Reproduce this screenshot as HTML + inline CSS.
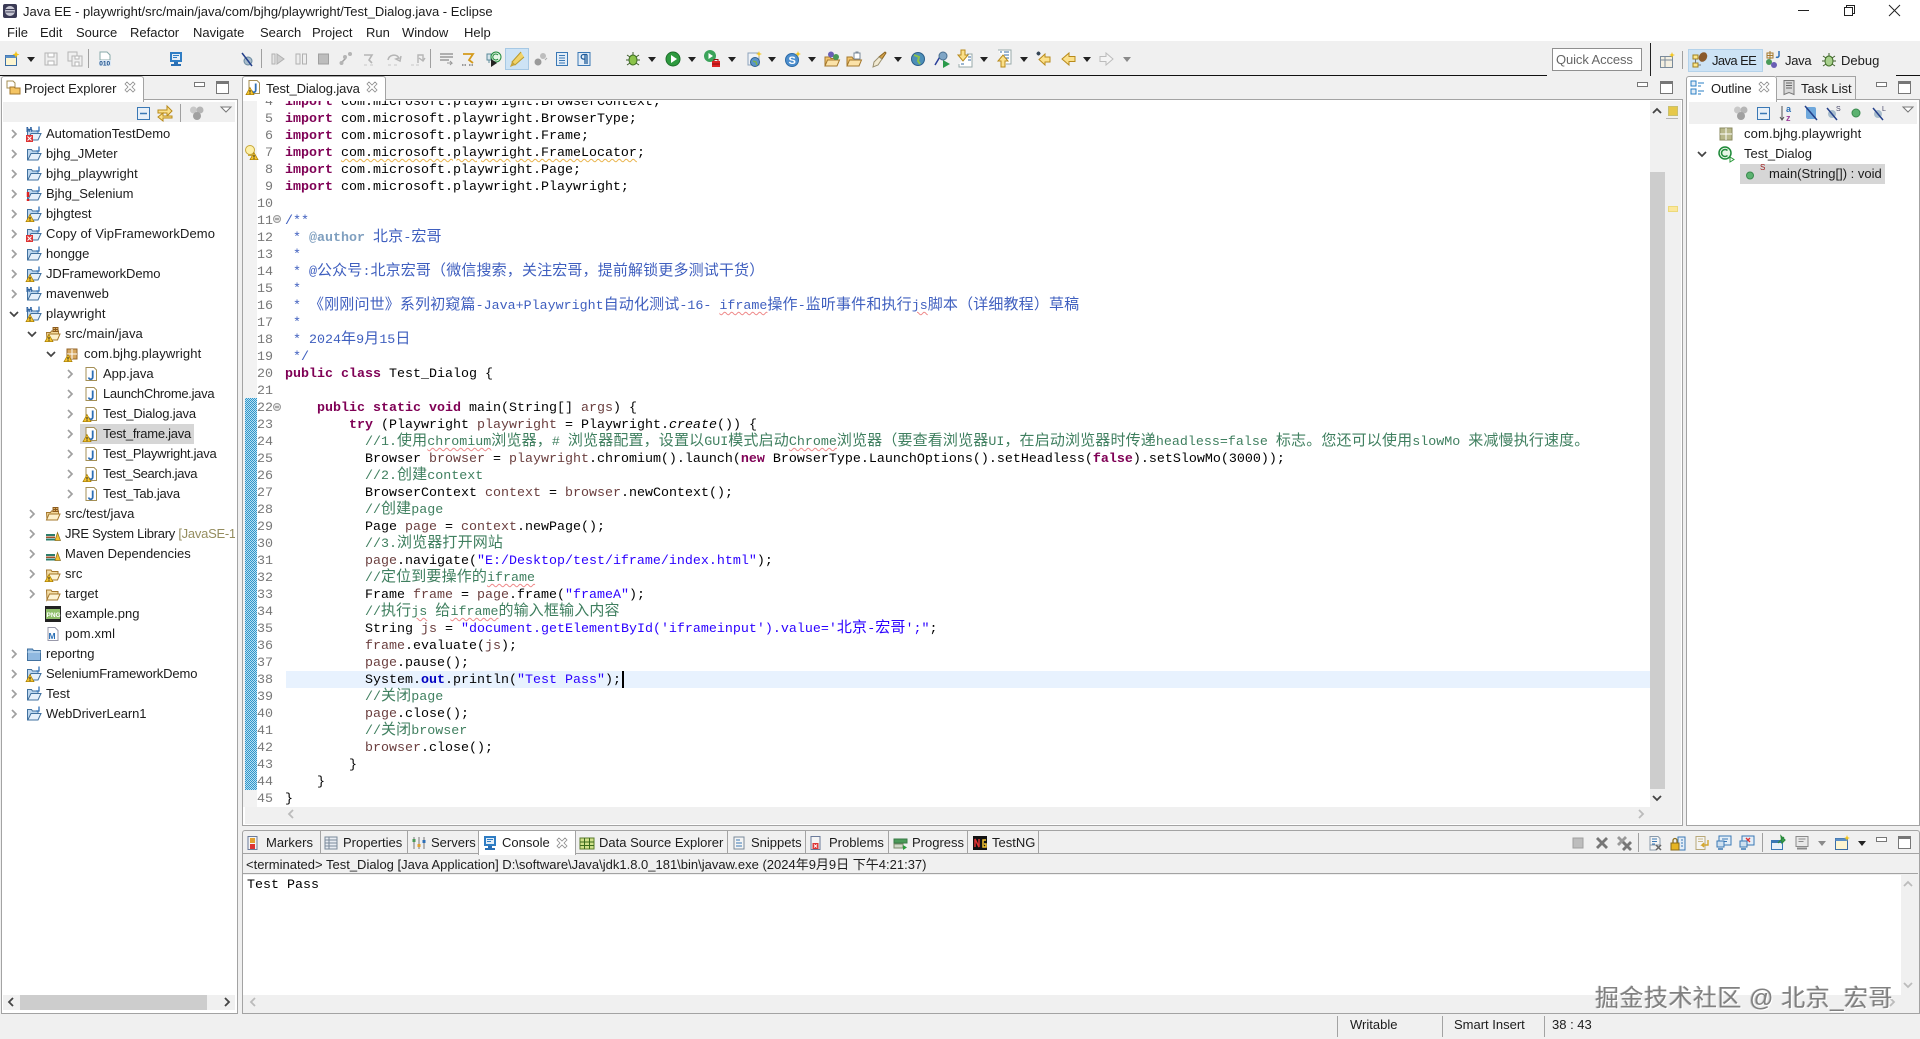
<!DOCTYPE html>
<html lang="zh"><head><meta charset="utf-8"><title>Java EE - Eclipse</title>
<style>
html,body{margin:0;padding:0;width:1920px;height:1039px;overflow:hidden;background:#f0f0f0}
body{position:relative;font:13px/20px "Liberation Sans","Noto Sans CJK SC",sans-serif;color:#1c1c1c}
div,svg,span.a{position:absolute}
.t{position:absolute;white-space:pre;line-height:20px;height:20px}
.i{position:absolute;width:16px;height:16px;overflow:visible}
.d{width:0;height:0;border:4px solid transparent;border-top:5px solid #222;border-bottom:0}
.v{width:1px;background:#a0a0a0}
.g{background:#f0f0f0}
.w{background:#fff}
.ln{background:#a3a3a3}
.mn{width:9px;height:3px;border:1px solid #777;background:#fff}
.mx{width:11px;height:11px;border:1px solid #777;background:#fff;box-shadow:inset 0 2px 0 #777}
pre{margin:0;font:13.33px/17px "Liberation Mono",monospace;color:#000;white-space:normal}
pre div{position:static;height:17px;white-space:pre}
pre b{color:#7f0055;font-weight:bold}
pre em{font:15px/0 "Noto Sans CJK SC","WenQuanYi Zen Hei",sans-serif;font-style:normal;letter-spacing:.15px}
pre var{font-style:normal;color:#6a3e3e}
pre cite{font-style:normal;color:#2a00ff}
pre dfn{font-style:normal;font-weight:bold;color:#0000c0}
pre .c{color:#3f7f5f}
pre .j{color:#3f5fbf}
pre .at{color:#7f9fbf;font-weight:bold}
pre u{text-decoration:underline wavy #e88;text-decoration-thickness:1px;text-underline-offset:2px}
pre u.y{text-decoration-color:#e9b44c}
.sel{background:#d6d6d6}
</style></head><body>
<svg width="0" height="0" style="position:absolute"><defs>
<g id="pf"><path d="M1.5 3.5h4l1 1.5h5.5v3H5L2 14H1.5z" fill="#bcd6ee" stroke="#41719f"/><path d="M5 7.5h10L12 14H1.8z" fill="#e6f0fa" stroke="#41719f"/><path d="M13 .5v4.5h-3" fill="none" stroke="#2f6fb5" stroke-width="1.3"/></g>
<g id="wn"><path d="M4 8.5l4 7.2H0z" fill="#f6c52e" stroke="#a67c00" stroke-width=".7"/><path d="M4 11v2.5M4 14.2v.9" stroke="#222"/></g>
<g id="er"><rect x="0" y="9" width="7" height="7" fill="#d33"/><path d="M1.5 10.5l4 4m0-4l-4 4" stroke="#fff"/></g>
<text id="mv" x="0" y="6" font-size="7.5" font-weight="bold" fill="#2a5fa0" font-family="Liberation Sans">M</text>
<g id="jf"><path d="M3 1.5h8l2.5 2.5v10.5H3z" fill="#fff" stroke="#a48f55"/><path d="M9.7 4.5v6.5a2 2 0 0 1-4 .5" stroke="#2f6fb5" stroke-width="1.8" fill="none"/></g>
<g id="sf"><path d="M1.5 6.5h4l1-1.5h7v3H4.5L2 14z" fill="#f4d99a" stroke="#a5782c"/><path d="M4 8h11l-2.5 6H1.5z" fill="#fdf0c9" stroke="#a5782c"/><path d="M8 1.5h5v4H8zM10.5 1v5M8 3.5h5" stroke="#8a5a1c" fill="#e2b164" stroke-width=".9"/></g>
<g id="pk"><path d="M3 3h10v10H3z" fill="#d6a760" stroke="#94662a"/><path d="M8 3v10M3 8h10" stroke="#fff"/></g>
<g id="lb"><path d="M1 10.5h9v1.5H1z" fill="#a0522d"/><path d="M1 12.5h9v2H1z" fill="#2e7d6b"/><path d="M1 8h9v2H1z" fill="#2e7d6b"/><path d="M10 14.5l2.5-8 3 8z" fill="#f1c232" stroke="#8a6d1c" stroke-width=".7"/></g>
<g id="fd"><path d="M1.5 4h4.5l1 1.5h6v2.5H5L2 14z" fill="#f4dda5" stroke="#a5782c"/><path d="M4.5 8H15l-2.5 6H1.8z" fill="#fdf3d5" stroke="#a5782c"/></g>
<g id="cr"><path d="M6 4l4 4-4 4" fill="none" stroke="#a0a0a0" stroke-width="1.7"/></g>
<g id="cd"><path d="M4 6l4 4 4-4" fill="none" stroke="#444" stroke-width="1.7"/></g>
<g id="xx"><path d="M5 3l3 3 3-3 2 2-3 3 3 3-2 2-3-3-3 3-2-2 3-3-3-3z" fill="#fff" stroke="#8c8c8c" stroke-width=".8"/></g>
</defs></svg>

<!-- title bar -->
<div class="w" style="left:0;top:0;width:1920px;height:41px"></div>
<svg class="i" style="left:2px;top:3px"><rect x="1" y="1" width="14" height="14" rx="2" fill="#3a3a55"/><circle cx="8" cy="8" r="5" fill="#c8c8d4"/><path d="M3.5 6.5h9M3.5 9h9" stroke="#3a3a55"/></svg>
<span class="t" style="left:23px;top:2px">Java EE - playwright/src/main/java/com/bjhg/playwright/Test_Dialog.java - Eclipse</span>
<div style="left:1798px;top:10px;width:11px;height:1px;background:#222"></div>
<svg class="i" style="left:1841px;top:2px"><path d="M3.5 5.5h8v8h-8zM5.5 5V3.5h8v8H12" fill="none" stroke="#222"/></svg>
<svg class="i" style="left:1887px;top:2px"><path d="M2 3l11 11m0-11L2 14" stroke="#222" fill="none"/></svg>
<span class="t" style="left:7px;top:23px">File</span><span class="t" style="left:40px;top:23px">Edit</span><span class="t" style="left:76px;top:23px">Source</span><span class="t" style="left:130px;top:23px">Refactor</span><span class="t" style="left:193px;top:23px">Navigate</span><span class="t" style="left:260px;top:23px">Search</span><span class="t" style="left:312px;top:23px">Project</span><span class="t" style="left:366px;top:23px">Run</span><span class="t" style="left:402px;top:23px">Window</span><span class="t" style="left:464px;top:23px">Help</span>

<!-- main toolbar -->
<div class="g" style="left:0;top:41px;width:1920px;height:34px"></div>
<div style="left:0;top:75px;width:1547px;height:1px;background:#111"></div>
<div style="left:1896px;top:75px;width:24px;height:1px;background:#111"></div>
<div style="left:1650px;top:43px;width:1px;height:33px;background:#222"></div>

<svg class="i" style="left:4px;top:51px"><path d="M1.5 4.5h11v10h-11z" fill="#fdf5d0" stroke="#3a6ea5"/><path d="M1.5 4.5h11v2.5h-11z" fill="#5a8fc8"/><path d="M12 0l1 2.5 2.5 1-2.5 1-1 2.5-1-2.5-2.5-1 2.5-1z" fill="#f5c518"/></svg>
<div class="d" style="left:27px;top:57px"></div>
<svg class="i" style="left:43px;top:51px"><path d="M2 2h12v12H2z" fill="#f0f0f0" stroke="#b5b5b5"/><path d="M5 2h6v4H5zM5 10h6v4H5z" fill="#fff" stroke="#b5b5b5"/></svg>
<svg class="i" style="left:67px;top:51px"><path d="M1 1h9v9H1z" fill="#f0f0f0" stroke="#b5b5b5"/><path d="M5 5h10v10H5z" fill="#f0f0f0" stroke="#b5b5b5"/><path d="M8 5h4v3H8zM8 11h4v4H8z" fill="#fff" stroke="#b5b5b5"/></svg>
<div class="v" style="left:88px;top:49px;height:19px"></div>
<svg class="i" style="left:97px;top:51px"><path d="M3 1h7l3 3v5H3z" fill="#fff" stroke="#8aa"/><rect x="2" y="9" width="12" height="6" fill="#dbe8f5"/><text x="2.3" y="14.5" font-size="6.5" font-weight="bold" fill="#1d4f8a" font-family="Liberation Sans">010</text></svg>
<svg class="i" style="left:168px;top:51px"><path d="M2 1h12v10H2z" fill="#2f7dc4"/><path d="M4 3h8v6H4z" fill="#e4eef7"/><path d="M5 4.5h6M5 6.5h4" stroke="#2f7dc4"/><path d="M6 11h4v2H6zM3 13h10v2H3z" fill="#2a6fb4"/></svg>
<svg class="i" style="left:239px;top:51px"><circle cx="9" cy="10" r="4" fill="#a9bdcc" stroke="#6a89a0"/><path d="M3 2l10 13" stroke="#24408a" stroke-width="1.5"/></svg>
<div class="v" style="left:261px;top:49px;height:19px"></div>
<svg class="i" style="left:270px;top:51px"><path d="M2 3h3v10H2z" fill="#e6e6e6" stroke="#b0b0b0"/><path d="M7 3l7 5-7 5z" fill="#cfcfcf" stroke="#b0b0b0"/></svg>
<svg class="i" style="left:293px;top:51px"><path d="M3 3h4v10H3zM9.500 3h4v10h-4z" fill="#eee" stroke="#b0b0b0"/></svg>
<svg class="i" style="left:316px;top:51px"><rect x="2.500" y="3" width="10" height="10" fill="#bdbdbd" stroke="#a0a0a0"/></svg>
<svg class="i" style="left:338px;top:51px"><path d="M3 12l5-5" stroke="#a0a0a0" stroke-width="1.500"/><circle cx="3.500" cy="12" r="2" fill="#b5b5b5"/><circle cx="7" cy="6" r="2" fill="#b5b5b5"/><circle cx="12" cy="3" r="2" fill="#b5b5b5"/></svg>
<svg class="i" style="left:361px;top:51px"><path d="M3 4h8l-3 5 3 3" fill="none" stroke="#b5b5b5" stroke-width="1.600"/><path d="M3 14h3M9 14h3" stroke="#c8c8c8"/></svg>
<svg class="i" style="left:386px;top:51px"><path d="M2 9a6 6 0 0 1 11-2l-3 1 4 2 1-5" fill="none" stroke="#b5b5b5" stroke-width="1.500"/><path d="M2 14h3M8 14h3" stroke="#c8c8c8"/></svg>
<svg class="i" style="left:410px;top:51px"><path d="M8 12V4l5 0v5M9 7l4 3 2-3" fill="none" stroke="#b5b5b5" stroke-width="1.400"/><path d="M1 14h3M6 14h3" stroke="#c8c8c8"/></svg>
<div class="v" style="left:430px;top:49px;height:19px"></div>
<svg class="i" style="left:439px;top:51px"><path d="M1 3h13M1 6h13M1 9h9" stroke="#888" stroke-width="1.300"/><path d="M8 12h5l-2-2M13 12l-2 2" stroke="#999" fill="none"/></svg>
<svg class="i" style="left:461px;top:51px"><path d="M2 3h10l-4 6 4 3" fill="none" stroke="#d49a1c" stroke-width="1.800"/><path d="M1 14h4M8 14h4" stroke="#444" stroke-dasharray="1.500 1"/></svg>
<svg class="i" style="left:486px;top:51px"><path d="M1 3h4v6H1zM3 9v3" stroke="#5a8a9a" fill="#d5e4ea"/><circle cx="10" cy="6" r="5" fill="#e6f5e6" stroke="#1f8a3a"/><path d="M12 4a3 3 0 1 0 0 4" stroke="#1f8a3a" fill="none"/><path d="M5 8l6 4-6 4z" fill="#222"/></svg>
<div style="left:505px;top:48px;width:22px;height:20px;background:#cde3f5;border:1px solid #a6c8e4"></div>
<svg class="i" style="left:508px;top:51px"><path d="M13 1L4 11l3 3 9-8" fill="#f1d36a" stroke="#b89a2c"/><path d="M2 16l2-5 3 3z" fill="#c7a43a"/></svg>
<svg class="i" style="left:532px;top:51px"><circle cx="6" cy="11" r="3.500" fill="#9a9a9a"/><circle cx="11" cy="5" r="3" fill="#bdbdbd"/><path d="M13 9l2-2" stroke="#aaa"/></svg>
<svg class="i" style="left:554px;top:51px"><path d="M2.500 1.500h11v13h-11z" fill="#e3edf7" stroke="#3a78b5"/><path d="M5 4.500h6M5 7h6M5 9.500h6M5 12h6" stroke="#3a78b5"/></svg>
<svg class="i" style="left:576px;top:51px"><path d="M2 1.500h12v13H2z" fill="#e3edf7" stroke="#3a78b5"/><path d="M11 3.500H7.500a2.300 2.300 0 0 0 0 4.600H9M9 3.500V13M11 3.500V13" stroke="#1e5b9a" fill="none" stroke-width="1.300"/></svg>
<svg class="i" style="left:625px;top:51px"><ellipse cx="8" cy="9" rx="4" ry="5" fill="#8bc34a" stroke="#3e6e25"/><path d="M2 4l3 2M14 4l-3 2M1 9h3M15 9h-3M2 14l3-2M14 14l-3-2M8 4V1" stroke="#3e5e2a"/></svg>
<div class="d" style="left:648px;top:57px"></div>
<svg class="i" style="left:665px;top:51px"><circle cx="8" cy="8" r="7" fill="#2e9a3f" stroke="#1c6e2a"/><path d="M6 4l6 4-6 4z" fill="#fff"/></svg>
<div class="d" style="left:688px;top:57px"></div>
<svg class="i" style="left:703px;top:49px"><circle cx="7" cy="7" r="6" fill="#3ba35a"/><path d="M5.500 4l4.500 3-4.500 3z" fill="#fff"/><path d="M9 12h8v6H9z" fill="#d22"/><path d="M11 12v-1.500h4V12M9 15h8" stroke="#8a1010" fill="none"/></svg>
<div class="d" style="left:728px;top:57px"></div>
<svg class="i" style="left:746px;top:51px"><path d="M2 2h11v12H2z" fill="#eef2f7" stroke="#8ea3bb"/><circle cx="9" cy="11" r="4.500" fill="#5b93c8" stroke="#2d5f8f"/><path d="M7 10l3 1 1 3" stroke="#7cb342" fill="none" stroke-width="1.400"/><path d="M13 0l.8 2.200L16 3l-2.200.8L13 6l-.8-2.200L10 3l2.200-.8z" fill="#f5c518"/></svg>
<div class="d" style="left:768px;top:57px"></div>
<svg class="i" style="left:785px;top:51px"><circle cx="7" cy="9" r="6.500" fill="#4d8fce" stroke="#2c6aa6"/><text x="3.500" y="13" font-size="11" font-weight="bold" fill="#fff" font-family="Liberation Sans">S</text><path d="M13 0l.8 2.200L16 3l-2.200.8L13 6l-.8-2.200L10 3l2.200-.8z" fill="#f5c518"/></svg>
<div class="d" style="left:808px;top:57px"></div>
<svg class="i" style="left:824px;top:51px"><path d="M1 6h5l1 1.500h5V15H1z" fill="#f3c56d" stroke="#a5782c"/><path d="M3.500 9h12L13 15H1z" fill="#fbe2a8" stroke="#a5782c"/><circle cx="7" cy="3.500" r="3" fill="#6a5fb5"/><circle cx="12" cy="6" r="3" fill="#4b9a58"/></svg>
<svg class="i" style="left:846px;top:51px"><path d="M1 6h5l1 1.500h6V15H1z" fill="#f3c56d" stroke="#a5782c"/><path d="M3.500 9h12L13 15H1z" fill="#fbe2a8" stroke="#a5782c"/><path d="M8 2h6v6H8z" fill="#fff" stroke="#7a8a9a"/><path d="M10 2V1h2v1" stroke="#7a8a9a" fill="none"/></svg>
<svg class="i" style="left:871px;top:51px"><path d="M14 1l1 1-4 6-3-2z" fill="#d4a24a" stroke="#8a6420"/><path d="M8 6l3 2-4 6-5 2 1-5z" fill="#f2ead2" stroke="#9a9070"/></svg>
<div class="d" style="left:894px;top:57px"></div>
<svg class="i" style="left:910px;top:51px"><circle cx="8" cy="8" r="6.500" fill="#4d8fb8" stroke="#2c5f8a"/><path d="M4 4l5 2-1 4 2 3" stroke="#8bc34a" fill="none" stroke-width="2"/></svg>
<svg class="i" style="left:934px;top:51px"><path d="M1 14L7 4l3 3" stroke="#2a3f9a" fill="none" stroke-width="1.500"/><circle cx="9" cy="5" r="4" fill="#7fa5c5" stroke="#4a6f90"/><path d="M9 9l7 4-7 4z" fill="#2a9a4a"/></svg>
<svg class="i" style="left:956px;top:49px"><path d="M11 5h5v13H3v-3" fill="#fff" stroke="#9aa"/><path d="M5 1h4v5h3l-5 6-5-6h3z" fill="#fbe08a" stroke="#b88a1a"/><path d="M12 8h3M12 11h3M5 15h3" stroke="#3a6ea5"/></svg>
<div class="d" style="left:980px;top:57px"></div>
<svg class="i" style="left:996px;top:49px"><path d="M2 1h13v14H10" fill="#fff" stroke="#9aa"/><path d="M4 3h2M8 3h5M8 6h5M8 9h5" stroke="#3a6ea5"/><path d="M5 18v-6H2l5-6 5 6H9v6z" fill="#fbe08a" stroke="#b88a1a"/></svg>
<div class="d" style="left:1020px;top:57px"></div>
<svg class="i" style="left:1036px;top:51px"><path d="M14 6H9V3L3 8.500 9 14v-3h5z" fill="#fbe08a" stroke="#b88a1a"/><path d="M1 1l3 3m0-3L1 4m1.500-3.500v4M.5 2.500h4" stroke="#345" fill="none"/></svg>
<svg class="i" style="left:1060px;top:51px"><path d="M15 5.500H9V2L2 8l7 6v-3.500h6z" fill="#fbe08a" stroke="#b88a1a"/></svg>
<div class="d" style="left:1083px;top:57px"></div>
<svg class="i" style="left:1099px;top:51px"><path d="M1 5.500h6V2l7 6-7 6v-3.500H1z" fill="#f4f4f4" stroke="#bcbcbc"/></svg>
<div class="d" style="left:1123px;top:57px;border-top-color:#8a8a8a"></div>

<div class="w" style="left:1552px;top:48px;width:88px;height:21px;border:1px solid #8f8f8f"></div>
<span class="t" style="left:1556px;top:50px;color:#666;letter-spacing:-.1px">Quick Access</span>
<svg class="i" style="left:1659px;top:52px"><path d="M1.500 4.500h12v11h-12z" fill="#f4efe0" stroke="#7a8a9a"/><path d="M1.500 8h12M6 4.500v11" stroke="#7a8a9a"/><path d="M13 0l.8 2.200L16 3l-2.200.8L13 6l-.8-2.200L10 3l2.200-.8z" fill="#f5c518"/></svg>
<div class="v" style="left:1682px;top:51px;height:18px"></div>
<div style="left:1688px;top:49px;width:73px;height:21px;background:#cde3f5;border:1px solid #b4d2ea"></div>
<svg class="i" style="left:1692px;top:52px"><rect x="1" y="3" width="5" height="4" fill="#fde68a" stroke="#a08020"/><rect x="1" y="11" width="5" height="4" fill="#fde68a" stroke="#a08020"/><path d="M3.500 7v4M6 13h3" stroke="#777"/><ellipse cx="11" cy="5" rx="4" ry="5" fill="#8a5a2c" transform="rotate(30 11 5)"/></svg>
<span class="t" style="left:1712px;top:51px;letter-spacing:-.6px">Java EE</span>
<svg class="i" style="left:1765px;top:51px"><path d="M2 2h6v5H2zM5 0v8M2 4.500h6" stroke="#a5782c" fill="none"/><circle cx="4" cy="11" r="3" fill="#4b9a58"/><circle cx="9" cy="14" r="3" fill="#6a5fb5"/><path d="M14 0v5a2 2 0 0 1-3 1" stroke="#2f6fb5" fill="none" stroke-width="1.500"/></svg>
<span class="t" style="left:1785px;top:51px;letter-spacing:-.3px">Java</span>
<svg class="i" style="left:1821px;top:52px"><ellipse cx="8" cy="9" rx="4" ry="5" fill="#a8d08d" stroke="#3e6e25"/><path d="M2 4l3 2M14 4l-3 2M1 9h3M15 9h-3M2 14l3-2M14 14l-3-2M8 4V1" stroke="#3e5e2a"/></svg>
<span class="t" style="left:1841px;top:51px">Debug</span>

<!-- Project Explorer panel -->
<div class="w" style="left:1px;top:99px;width:235px;height:913px;border:1px solid #a3a3a3"></div>
<div class="w" style="left:1px;top:76px;width:141px;height:26px;border:1px solid #a3a3a3;border-bottom:0;border-radius:3px 3px 0 0"></div>
<svg class="i" style="left:5px;top:79px"><path d="M2 2h6l2 2v5H2z" fill="#fff" stroke="#a48f55"/><path d="M5 8h4l1 1h5v6H5z" fill="#f4c463" stroke="#a5782c"/></svg>
<span class="t" style="left:24px;top:79px">Project Explorer</span>
<svg class="i" style="left:122px;top:79px"><use href="#xx"/></svg>
<div class="mn" style="left:194px;top:82px"></div><div class="mx" style="left:216px;top:81px"></div>
<div class="g" style="left:3px;top:102px;width:232px;height:20px"></div>
<svg class="i" style="left:136px;top:105px"><rect x="1.500" y="2.500" width="12" height="12" fill="#e8f0f8" stroke="#3a78b5"/><path d="M4 8.500h7" stroke="#3a78b5" stroke-width="1.500"/></svg>
<svg class="i" style="left:157px;top:105px"><path d="M1 5h9V1l5 5-5 5V8H1z" fill="#fbe08a" stroke="#b88a1a"/><path d="M15 11H6V8l-5 4 5 4v-3h9z" fill="#fbe08a" stroke="#b88a1a"/></svg>
<div class="v" style="left:180px;top:104px;height:18px"></div>
<svg class="i" style="left:189px;top:105px"><circle cx="4.500" cy="5" r="3.500" fill="#c8c8c8"/><circle cx="11" cy="5" r="3.500" fill="#b5b5b5"/><circle cx="8" cy="11" r="4" fill="#a0a0a0"/></svg>
<svg class="i" style="left:218px;top:102px"><path d="M3 5h10l-5 5z" fill="#fff" stroke="#777"/></svg>

<div style="left:3px;top:122px;width:232px;height:872px;overflow:hidden" class="w">
<div class="sel" style="left:77px;top:302px;width:114px;height:20px"></div>
</div>
<div style="left:3px;top:122px;width:232px;height:872px;overflow:hidden">
<span class="t" style="left:43px;top:2px">AutomationTestDemo</span>
<span class="t" style="left:43px;top:22px">bjhg_JMeter</span>
<span class="t" style="left:43px;top:42px;letter-spacing:.1px">bjhg_playwright</span>
<span class="t" style="left:43px;top:62px">Bjhg_Selenium</span>
<span class="t" style="left:43px;top:82px">bjhgtest</span>
<span class="t" style="left:43px;top:102px;letter-spacing:.1px">Copy of VipFrameworkDemo</span>
<span class="t" style="left:43px;top:122px">hongge</span>
<span class="t" style="left:43px;top:142px;letter-spacing:-.08px">JDFrameworkDemo</span>
<span class="t" style="left:43px;top:162px">mavenweb</span>
<span class="t" style="left:43px;top:182px;letter-spacing:.1px">playwright</span>
<span class="t" style="left:62px;top:202px;letter-spacing:.1px">src/main/java</span>
<span class="t" style="left:81px;top:222px;letter-spacing:.13px">com.bjhg.playwright</span>
<span class="t" style="left:100px;top:242px">App.java</span>
<span class="t" style="left:100px;top:262px;letter-spacing:-.3px">LaunchChrome.java</span>
<span class="t" style="left:100px;top:282px;letter-spacing:-.15px">Test_Dialog.java</span>
<span class="t" style="left:100px;top:302px;letter-spacing:-.25px">Test_frame.java</span>
<span class="t" style="left:100px;top:322px;letter-spacing:-.25px">Test_Playwright.java</span>
<span class="t" style="left:100px;top:342px;letter-spacing:-.35px">Test_Search.java</span>
<span class="t" style="left:100px;top:362px;letter-spacing:-.2px">Test_Tab.java</span>
<span class="t" style="left:62px;top:382px">src/test/java</span>
<span class="t" style="left:62px;top:402px;letter-spacing:-.27px">JRE System Library <span style="color:#958d5f">[JavaSE-1.8]</span></span>
<span class="t" style="left:62px;top:422px">Maven Dependencies</span>
<span class="t" style="left:62px;top:442px">src</span>
<span class="t" style="left:62px;top:462px">target</span>
<span class="t" style="left:62px;top:482px">example.png</span>
<span class="t" style="left:62px;top:502px;letter-spacing:.15px">pom.xml</span>
<span class="t" style="left:43px;top:522px">reportng</span>
<span class="t" style="left:43px;top:542px;letter-spacing:-.12px">SeleniumFrameworkDemo</span>
<span class="t" style="left:43px;top:562px">Test</span>
<span class="t" style="left:43px;top:582px;letter-spacing:-.08px">WebDriverLearn1</span>
</div>
<!-- tree chevrons -->
<svg style="left:0;top:0;width:240px;height:760px;overflow:visible">
<use href="#cr" x="6" y="126"/><use href="#cr" x="6" y="146"/><use href="#cr" x="6" y="166"/><use href="#cr" x="6" y="186"/><use href="#cr" x="6" y="206"/><use href="#cr" x="6" y="226"/><use href="#cr" x="6" y="246"/><use href="#cr" x="6" y="266"/><use href="#cr" x="6" y="286"/><use href="#cd" x="6" y="306"/>
<use href="#cd" x="24" y="326"/><use href="#cd" x="43" y="346"/>
<use href="#cr" x="62" y="366"/><use href="#cr" x="62" y="386"/><use href="#cr" x="62" y="406"/><use href="#cr" x="62" y="426"/><use href="#cr" x="62" y="446"/><use href="#cr" x="62" y="466"/><use href="#cr" x="62" y="486"/>
<use href="#cr" x="24" y="506"/><use href="#cr" x="24" y="526"/><use href="#cr" x="24" y="546"/><use href="#cr" x="24" y="566"/><use href="#cr" x="24" y="586"/>
<use href="#cr" x="6" y="646"/><use href="#cr" x="6" y="666"/><use href="#cr" x="6" y="686"/><use href="#cr" x="6" y="706"/>
<!-- tree icons -->
<g transform="translate(26 126)"><use href="#pf"/><use href="#mv"/><use href="#er"/></g>
<g transform="translate(26 146)"><use href="#pf"/></g>
<g transform="translate(26 166)"><use href="#pf"/></g>
<g transform="translate(26 186)"><use href="#pf"/><path d="M2 6v5M2 13v2" stroke="#d22" stroke-width="2.500"/></g>
<g transform="translate(26 206)"><use href="#pf"/><use href="#wn"/></g>
<g transform="translate(26 226)"><use href="#pf"/><use href="#er"/></g>
<g transform="translate(26 246)"><use href="#pf"/></g>
<g transform="translate(26 266)"><use href="#pf"/><use href="#wn"/></g>
<g transform="translate(26 286)"><use href="#pf"/><use href="#mv"/></g>
<g transform="translate(26 306)"><use href="#pf"/><use href="#mv"/><use href="#wn"/></g>
<g transform="translate(45 326)"><use href="#sf"/><use href="#wn"/></g>
<g transform="translate(64 346)"><use href="#pk"/><use href="#wn"/></g>
<g transform="translate(83 366)"><use href="#jf"/></g>
<g transform="translate(83 386)"><use href="#jf"/></g>
<g transform="translate(83 406)"><use href="#jf"/><use href="#wn"/></g>
<g transform="translate(83 426)"><use href="#jf"/><use href="#wn"/></g>
<g transform="translate(83 446)"><use href="#jf"/></g>
<g transform="translate(83 466)"><use href="#jf"/><use href="#wn"/></g>
<g transform="translate(83 486)"><use href="#jf"/></g>
<g transform="translate(45 506)"><use href="#sf"/></g>
<g transform="translate(45 526)"><use href="#lb"/></g>
<g transform="translate(45 546)"><use href="#lb"/></g>
<g transform="translate(45 566)"><use href="#fd"/><use href="#wn"/></g>
<g transform="translate(45 586)"><use href="#fd"/></g>
<g transform="translate(45 606)"><rect x="0" y="0" width="16" height="16" fill="#222"/><rect x="1" y="3" width="14" height="10" fill="#8fbf6a"/><text x="1.500" y="11" font-size="6.500" font-weight="bold" fill="#fff" font-family="Liberation Sans">PNG</text></g>
<g transform="translate(45 626)"><path d="M3 1.500h7l3 3v10H3z" fill="#fff" stroke="#99a"/><text x="3.500" y="13" font-size="8.500" font-weight="bold" fill="#2a6fb5" font-family="Liberation Sans">M</text></g>
<g transform="translate(26 646)"><path d="M1.500 3h5l1 1.500h7v10h-13z" fill="#8fb8e0" stroke="#41719f"/><path d="M1.500 6h13" stroke="#cfe3f5"/></g>
<g transform="translate(26 666)"><use href="#pf"/><use href="#wn"/></g>
<g transform="translate(26 686)"><use href="#pf"/></g>
<g transform="translate(26 706)"><use href="#pf"/></g>
</svg>
<!-- explorer scrollbar -->
<div class="g" style="left:3px;top:995px;width:232px;height:15px"></div>
<div style="left:20px;top:995px;width:187px;height:15px;background:#cdcdcd"></div>
<svg class="i" style="left:3px;top:994px"><path d="M10 4L6 8l4 4" fill="none" stroke="#444" stroke-width="1.800"/></svg>
<svg class="i" style="left:219px;top:994px"><path d="M6 4l4 4-4 4" fill="none" stroke="#444" stroke-width="1.800"/></svg>

<!-- Editor panel -->
<div class="w" style="left:242px;top:99px;width:1439px;height:725px;border:1px solid #a3a3a3"></div>
<div class="w" style="left:242px;top:76px;width:142px;height:26px;border:1px solid #a3a3a3;border-bottom:0;border-radius:3px 3px 0 0"></div>
<svg class="i" style="left:246px;top:79px"><use href="#jf"/><use href="#wn"/></svg>
<span class="t" style="left:266px;top:79px;letter-spacing:-.1px">Test_Dialog.java</span>
<svg class="i" style="left:364px;top:79px"><use href="#xx"/></svg>
<div class="mn" style="left:1637px;top:82px"></div><div class="mx" style="left:1660px;top:81px"></div>
<div style="left:243px;top:101px;width:14px;height:706px;background:#f2f2f2"></div>
<div style="left:245px;top:398px;width:12px;height:392px;background:repeating-conic-gradient(#2f95cb 0 25%,#b7e0f2 0 50%) 0 0/2px 2px"></div>
<div style="left:286px;top:671px;width:1364px;height:17px;background:#e8f2fe"></div>
<!-- line numbers -->
<div style="left:243px;top:101px;width:30px;height:706px;overflow:hidden">
<pre style="position:absolute;top:-7px;right:0;text-align:right;color:#787878"><div>4</div><div>5</div><div>6</div><div>7</div><div>8</div><div>9</div><div>10</div><div>11</div><div>12</div><div>13</div><div>14</div><div>15</div><div>16</div><div>17</div><div>18</div><div>19</div><div>20</div><div>21</div><div>22</div><div>23</div><div>24</div><div>25</div><div>26</div><div>27</div><div>28</div><div>29</div><div>30</div><div>31</div><div>32</div><div>33</div><div>34</div><div>35</div><div>36</div><div>37</div><div>38</div><div>39</div><div>40</div><div>41</div><div>42</div><div>43</div><div>44</div><div>45</div></pre>
</div>
<svg class="i" style="left:269px;top:211px"><circle cx="8" cy="8" r="3.500" fill="#e8e8e8" stroke="#9a9a9a"/><path d="M6 8h4" stroke="#666"/></svg>
<svg class="i" style="left:269px;top:399px"><circle cx="8" cy="8" r="3.500" fill="#e8e8e8" stroke="#9a9a9a"/><path d="M6 8h4" stroke="#666"/></svg>
<svg class="i" style="left:244px;top:144px"><circle cx="6" cy="6" r="4.500" fill="#fdf0a8" stroke="#c8a83a"/><path d="M4 10h4v2H4z" fill="#c8a83a"/><use href="#wn" x="6"/></svg>
<!-- code -->
<div style="left:285px;top:101px;width:1365px;height:706px;overflow:hidden">
<pre style="position:absolute;left:0;top:-7px;width:1365px"><div><b>import</b> com.microsoft.playwright.BrowserContext;</div><div><b>import</b> com.microsoft.playwright.BrowserType;</div><div><b>import</b> com.microsoft.playwright.Frame;</div><div><b>import</b> <u class="y">com.microsoft.playwright.FrameLocator</u>;</div><div><b>import</b> com.microsoft.playwright.Page;</div><div><b>import</b> com.microsoft.playwright.Playwright;</div><div></div><div class="j">/**</div><div class="j"> * <span class="at">@author</span> <em>北京</em>-<em>宏哥</em></div><div class="j"> *</div><div class="j"> * @<em>公众号</em>:<em>北京宏哥（微信搜索，关注宏哥，提前解锁更多测试干货）</em></div><div class="j"> *</div><div class="j"> * <em>《刚刚问世》系列初窥篇</em>-Java+Playwright<em>自动化测试</em>-16- <u>iframe</u><em>操作</em>-<em>监听事件和执行</em><u>js</u><em>脚本（详细教程）草稿</em></div><div class="j"> *</div><div class="j"> * 2024<em>年</em>9<em>月</em>15<em>日</em></div><div class="j"> */</div><div><b>public</b> <b>class</b> Test_Dialog {</div><div></div><div>    <b>public</b> <b>static</b> <b>void</b> main(String[] <var>args</var>) {</div><div>        <b>try</b> (Playwright <var>playwright</var> = Playwright.<i>create</i>()) {</div><div class="c">          //1.<em>使用</em><u>chromium</u><em>浏览器，</em># <em>浏览器配置，设置以</em>GUI<em>模式启动</em><u>Chrome</u><em>浏览器（要查看浏览器</em>UI<em>，在启动浏览器时传递</em>headless=false <em>标志。您还可以使用</em>slowMo <em>来减慢执行速度。</em></div><div>          Browser <var>browser</var> = <var>playwright</var>.chromium().launch(<b>new</b> BrowserType.LaunchOptions().setHeadless(<b>false</b>).setSlowMo(3000));</div><div class="c">          //2.<em>创建</em>context</div><div>          BrowserContext <var>context</var> = <var>browser</var>.newContext();</div><div class="c">          //<em>创建</em>page</div><div>          Page <var>page</var> = <var>context</var>.newPage();</div><div class="c">          //3.<em>浏览器打开网站</em></div><div>          <var>page</var>.navigate(<cite>"E:/Desktop/test/iframe/index.html"</cite>);</div><div class="c">          //<em>定位到要操作的</em><u>iframe</u></div><div>          Frame <var>frame</var> = <var>page</var>.frame(<cite>"frameA"</cite>);</div><div class="c">          //<em>执行</em><u>js</u> <em>给</em><u>iframe</u><em>的输入框输入内容</em></div><div>          String <var>js</var> = <cite>"document.getElementById('iframeinput').value='<em>北京</em>-<em>宏哥</em>';"</cite>;</div><div>          <var>frame</var>.evaluate(<var>js</var>);</div><div>          <var>page</var>.pause();</div><div>          System.<dfn>out</dfn>.println(<cite>"Test Pass"</cite>);</div><div class="c">          //<em>关闭</em>page</div><div>          <var>page</var>.close();</div><div class="c">          //<em>关闭</em>browser</div><div>          <var>browser</var>.close();</div><div>        }</div><div>    }</div><div>}</div></pre>
</div>
<div style="left:622px;top:671px;width:2px;height:17px;background:#000"></div>
<!-- editor scrollbars -->
<div class="g" style="left:1650px;top:101px;width:31px;height:723px"></div>
<div style="left:1650px;top:172px;width:15px;height:617px;background:#cdcdcd"></div>
<svg class="i" style="left:1649px;top:103px"><path d="M4 10l4-4 4 4" fill="none" stroke="#444" stroke-width="1.800"/></svg>
<svg class="i" style="left:1649px;top:790px"><path d="M4 6l4 4 4-4" fill="none" stroke="#444" stroke-width="1.800"/></svg>
<div style="left:1668px;top:106px;width:8px;height:8px;background:#e6c84a;border:1px solid #c8c070"></div>
<div style="left:1666px;top:118px;width:12px;height:1px;background:#b5b5b5"></div>
<div style="left:1668px;top:206px;width:8px;height:4px;background:#fbe79a;border:1px solid #ecd97a"></div>
<div class="g" style="left:245px;top:807px;width:1405px;height:17px"></div>
<svg class="i" style="left:283px;top:806px"><path d="M10 4L6 8l4 4" fill="none" stroke="#bbb" stroke-width="1.800"/></svg>
<svg class="i" style="left:1633px;top:806px"><path d="M6 4l4 4-4 4" fill="none" stroke="#bbb" stroke-width="1.800"/></svg>

<!-- Outline panel -->
<div class="w" style="left:1686px;top:99px;width:232px;height:725px;border:1px solid #a3a3a3"></div>
<div class="w" style="left:1686px;top:76px;width:89px;height:26px;border:1px solid #a3a3a3;border-bottom:0;border-radius:3px 3px 0 0"></div>
<div style="left:1776px;top:76px;width:79px;height:23px;border:1px solid #a3a3a3;border-left:0;border-bottom:0"></div>
<svg class="i" style="left:1689px;top:79px"><path d="M2 2h5v5H2zM2 10h5v5H2z" fill="#e3edf7" stroke="#2a7fc4"/><path d="M9 4h6M9 7h3M9 12h6M9 15h3" stroke="#2a7fc4"/></svg>
<span class="t" style="left:1711px;top:79px;letter-spacing:-.1px">Outline</span>
<svg class="i" style="left:1756px;top:79px"><use href="#xx"/></svg>
<svg class="i" style="left:1781px;top:79px"><path d="M3 1.500h10v14l-5-2-5 2z" fill="#d8d8d8" stroke="#777"/><path d="M5 4h6M5 6.500h6M5 9h6" stroke="#666"/></svg>
<span class="t" style="left:1801px;top:79px">Task List</span>
<div class="mn" style="left:1876px;top:82px"></div><div class="mx" style="left:1898px;top:81px"></div>
<div class="g" style="left:1689px;top:102px;width:228px;height:22px"></div>
<svg class="i" style="left:1733px;top:105px"><circle cx="4.500" cy="5" r="3.500" fill="#c8c8c8"/><circle cx="11" cy="5" r="3.500" fill="#b5b5b5"/><circle cx="8" cy="11" r="4" fill="#a0a0a0"/></svg>
<svg class="i" style="left:1756px;top:105px"><rect x="1.500" y="2.500" width="12" height="12" fill="#e8f0f8" stroke="#3a78b5"/><path d="M4 8.500h7" stroke="#3a78b5" stroke-width="1.500"/></svg>
<svg class="i" style="left:1779px;top:105px"><path d="M3 1v13M1 12l2 3 2-3" stroke="#555" fill="none"/><text x="7" y="7" font-size="9" font-weight="bold" fill="#2a6fb5" font-family="Liberation Sans">a</text><text x="7" y="16" font-size="9" font-weight="bold" fill="#9a3f9a" font-family="Liberation Sans">z</text></svg>
<svg class="i" style="left:1803px;top:105px"><rect x="3" y="2" width="10" height="12" rx="2" fill="#6fa8dc"/><path d="M2 1l12 14" stroke="#24408a" stroke-width="1.500"/></svg>
<svg class="i" style="left:1825px;top:105px"><circle cx="7" cy="9" r="4" fill="#a9bdcc"/><path d="M2 3l10 12" stroke="#24408a" stroke-width="1.500"/><text x="11" y="6" font-size="7" fill="#446" font-family="Liberation Sans">S</text></svg>
<svg class="i" style="left:1848px;top:105px"><circle cx="8" cy="8" r="4" fill="#5cb270" stroke="#3a8a4e"/></svg>
<svg class="i" style="left:1871px;top:105px"><circle cx="7" cy="9" r="4" fill="#a9bdcc"/><path d="M2 3l10 12" stroke="#24408a" stroke-width="1.500"/><text x="11" y="6" font-size="7" fill="#446" font-family="Liberation Sans">L</text></svg>
<svg class="i" style="left:1900px;top:102px"><path d="M3 5h10l-5 5z" fill="#fff" stroke="#777"/></svg>
<svg class="i" style="left:1718px;top:126px"><path d="M2 2h12v12H2z" fill="#b8b88a" stroke="#8a8a60"/><path d="M8 2v12M2 8h12" stroke="#fff"/></svg>
<span class="t" style="left:1744px;top:124px;letter-spacing:.13px">com.bjhg.playwright</span>
<svg class="i" style="left:1694px;top:146px"><use href="#cd"/></svg>
<svg class="i" style="left:1717px;top:146px"><circle cx="8" cy="7" r="6" fill="#e6f5e6" stroke="#1f8a3a" stroke-width="1.500"/><path d="M10.500 4.500a3.500 3.500 0 1 0 0 5" stroke="#1f8a3a" stroke-width="1.500" fill="none"/><path d="M13 11l4 2.500-4 2.500z" fill="#fff" stroke="#2a9a3a"/></svg>
<span class="t" style="left:1744px;top:144px">Test_Dialog</span>
<div class="sel" style="left:1740px;top:164px;width:145px;height:20px"></div>
<svg class="i" style="left:1742px;top:167px"><circle cx="8" cy="8.500" r="3.500" fill="#5cb270" stroke="#3a8a4e"/></svg>
<span class="t" style="left:1760px;top:158px;font-size:8px;color:#a02020">S</span>
<span class="t" style="left:1769px;top:164px">main(String[]) : void</span>

<!-- Console panel -->
<div class="g" style="left:242px;top:830px;width:1676px;height:182px;border:1px solid #a3a3a3;border-radius:3px 3px 0 0"></div>
<div class="ln" style="left:243px;top:853px;width:1676px;height:1px"></div>
<div class="w" style="left:478px;top:830px;width:96px;height:24px;border-left:1px solid #a3a3a3;border-right:1px solid #a3a3a3;border-top:1px solid #a3a3a3"></div>
<div class="ln" style="left:320px;top:831px;width:1px;height:22px"></div><div class="ln" style="left:407px;top:831px;width:1px;height:22px"></div><div class="ln" style="left:727px;top:831px;width:1px;height:22px"></div><div class="ln" style="left:805px;top:831px;width:1px;height:22px"></div><div class="ln" style="left:888px;top:831px;width:1px;height:22px"></div><div class="ln" style="left:967px;top:831px;width:1px;height:22px"></div><div class="ln" style="left:1038px;top:831px;width:1px;height:22px"></div>
<svg class="i" style="left:245px;top:835px"><path d="M3 1.500h9v13H3z" fill="#f4f4f4" stroke="#6a7a9a"/><rect x="5" y="3" width="5" height="5" fill="#e0a030"/><rect x="5" y="9" width="5" height="5" fill="#d33"/></svg>
<span class="t" style="left:266px;top:833px">Markers</span>
<svg class="i" style="left:323px;top:835px"><path d="M2 2h12v12H2z" fill="#e8ecf2" stroke="#7a8a9a"/><path d="M2 5h12M2 8h12M2 11h12M6 2v12" stroke="#7a8a9a"/></svg>
<span class="t" style="left:343px;top:833px">Properties</span>
<svg class="i" style="left:411px;top:835px"><path d="M3 2v12M8 2v12M13 2v12" stroke="#777"/><rect x="1.500" y="4" width="3" height="3" fill="#4b9a58"/><rect x="6.500" y="9" width="3" height="3" fill="#e0a030"/><rect x="11.500" y="5" width="3" height="3" fill="#2f6fb5"/></svg>
<span class="t" style="left:431px;top:833px">Servers</span>
<svg class="i" style="left:482px;top:835px"><path d="M2 1h12v10H2z" fill="#2f7dc4"/><path d="M4 3h8v6H4z" fill="#e4eef7"/><path d="M5 4.500h6M5 6.500h4" stroke="#2f7dc4"/><path d="M6 11h4v2H6zM3 13h10v2H3z" fill="#2a6fb4"/></svg>
<span class="t" style="left:502px;top:833px">Console</span>
<svg class="i" style="left:554px;top:835px"><use href="#xx"/></svg>
<svg class="i" style="left:579px;top:835px"><path d="M1 3h14v11H1z" fill="#cfe08a" stroke="#5a7a2a"/><path d="M5.500 3v11M10.500 3v11M1 7h14M1 10.500h14" stroke="#3a6a1a"/></svg>
<span class="t" style="left:599px;top:833px">Data Source Explorer</span>
<svg class="i" style="left:731px;top:835px"><path d="M3 2h10v12H3z" fill="#f4f4f4" stroke="#7a8a9a"/><path d="M5 5h4M5 8h6M5 11h6" stroke="#3a78b5"/></svg>
<span class="t" style="left:751px;top:833px">Snippets</span>
<svg class="i" style="left:808px;top:835px"><path d="M3 1.500h9v13H3z" fill="#f4f4f4" stroke="#6a7a9a"/><rect x="4.500" y="8" width="6" height="6" fill="#d33"/><path d="M6 9.500l3 3m0-3l-3 3" stroke="#fff"/></svg>
<span class="t" style="left:829px;top:833px">Problems</span>
<svg class="i" style="left:893px;top:835px"><rect x="1" y="4" width="13" height="4" fill="#4b9a58" stroke="#3a7a46"/><rect x="1" y="9" width="9" height="4" fill="#cfd8c8" stroke="#7a8a6a"/><path d="M10 10l4 2.500-4 2.500z" fill="#2a9a3a"/></svg>
<span class="t" style="left:912px;top:833px">Progress</span>
<svg class="i" style="left:972px;top:835px"><rect x="1" y="1" width="14" height="14" fill="#111"/><path d="M3 12V4l4 8V4" stroke="#d33" stroke-width="1.500" fill="none"/><path d="M14 5h-3v7h3V9h-2" stroke="#f4c430" stroke-width="1.500" fill="none"/></svg>
<span class="t" style="left:992px;top:833px">TestNG</span>

<svg class="i" style="left:1570px;top:835px"><rect x="3" y="3" width="10" height="10" fill="#bdbdbd" stroke="#a0a0a0"/></svg>
<svg class="i" style="left:1594px;top:835px"><path d="M2 4l2-2 4 4 4-4 2 2-4 4 4 4-2 2-4-4-4 4-2-2 4-4z" fill="#777"/></svg>
<svg class="i" style="left:1617px;top:835px"><path d="M0 3l2-2 3 3 3-3 2 2-3 3 3 3-2 2-3-3-3 3-2-2 3-3z" fill="#9a9a9a"/><path d="M5 8l2-2 3 3 3-3 2 2-3 3 3 3-2 2-3-3-3 3-2-2 3-3z" fill="#777"/></svg>
<div class="v" style="left:1638px;top:833px;height:19px"></div>
<svg class="i" style="left:1647px;top:835px"><path d="M3 1.500h8l2 2V10H3zM3 10v5h6" fill="#f4f4f4" stroke="#8a9aaa"/><path d="M5 4h5M5 6.500h5M5 9h3" stroke="#3a78b5"/><path d="M9 10l5 5m0-5l-5 5" stroke="#666" stroke-width="1.500"/></svg>
<svg class="i" style="left:1670px;top:835px"><path d="M8 2h7v13H8z" fill="#e3edf7" stroke="#3a78b5"/><path d="M11 5h2M11 8h2M11 11h2" stroke="#3a78b5"/><rect x="1" y="8" width="8" height="7" fill="#e6b422" stroke="#8a6d1c"/><path d="M3 8V5.500a2 2 0 0 1 4 0V8" fill="none" stroke="#8a6d1c" stroke-width="1.300"/></svg>
<svg class="i" style="left:1694px;top:835px"><path d="M2 1.500h9v13H2z" fill="#f4f4f4" stroke="#b8a878"/><path d="M4 4h5M4 6.500h5" stroke="#c8b888"/><path d="M14 5v5H8l2-2M8 10l2 2" fill="none" stroke="#d4a62c" stroke-width="1.400"/></svg>
<svg class="i" style="left:1716px;top:835px"><rect x="3" y="1" width="12" height="9" fill="#e4eef7" stroke="#3a78b5"/><path d="M6 4h6M6 6.500h5" stroke="#3a78b5"/><rect x="1" y="6" width="7" height="6" fill="#cfe0f0" stroke="#3a78b5"/><path d="M2 14h5" stroke="#3a78b5" stroke-width="1.500"/></svg>
<svg class="i" style="left:1739px;top:835px"><rect x="3" y="1" width="12" height="9" fill="#e4eef7" stroke="#3a78b5"/><path d="M7 3l4 4m0-4l-4 4" stroke="#d33" stroke-width="1.400"/><rect x="1" y="6" width="7" height="6" fill="#cfe0f0" stroke="#3a78b5"/><path d="M2 14h5" stroke="#3a78b5" stroke-width="1.500"/></svg>
<div class="v" style="left:1762px;top:833px;height:19px"></div>
<svg class="i" style="left:1770px;top:835px"><path d="M1.500 5.500h11v9h-11z" fill="#e8f0f8" stroke="#3a78b5"/><path d="M1.500 5.500h11V8h-11z" fill="#3a78b5"/><path d="M8 8l6-6M11 1l4 4-3 3z" stroke="#2a8a3a" fill="#3ba35a" stroke-width="1.200"/></svg>
<svg class="i" style="left:1794px;top:835px"><path d="M2 1.500h12v10H2z" fill="#e8e8e8" stroke="#8a8a8a"/><path d="M4.500 4h7M4.500 6.500h5" stroke="#8a8a8a"/><path d="M3 13.500h10" stroke="#8a8a8a" stroke-width="2"/></svg>
<div class="d" style="left:1818px;top:841px;border-top-color:#8a8a8a"></div>
<svg class="i" style="left:1834px;top:835px"><path d="M1.500 3.500h12v11h-12z" fill="#fdf5d0" stroke="#3a6ea5"/><path d="M1.500 3.500h12V6h-12z" fill="#5a8fc8"/><path d="M13 0l.8 2.200L16 3l-2.200.8L13 6l-.8-2.200L10 3l2.200-.8z" fill="#f5c518"/></svg>
<div class="d" style="left:1858px;top:841px"></div>
<div class="mn" style="left:1876px;top:837px"></div><div class="mx" style="left:1898px;top:836px"></div>

<div class="ln" style="left:243px;top:873px;width:1675px;height:1px"></div>
<span class="t" style="left:246px;top:855px">&lt;terminated&gt; Test_Dialog [Java Application] D:\software\Java\jdk1.8.0_181\bin\javaw.exe (2024年9月9日 下午4:21:37)</span>
<div class="w" style="left:243px;top:875px;width:1658px;height:120px"></div>
<pre style="position:absolute;left:247px;top:877px"><div>Test Pass</div></pre>
<svg class="i" style="left:1900px;top:876px"><path d="M4 10l4-4 4 4" fill="none" stroke="#bbb" stroke-width="1.800"/></svg>
<svg class="i" style="left:1900px;top:977px"><path d="M4 6l4 4 4-4" fill="none" stroke="#bbb" stroke-width="1.800"/></svg>
<svg class="i" style="left:245px;top:994px"><path d="M10 4L6 8l4 4" fill="none" stroke="#bbb" stroke-width="1.800"/></svg>
<svg class="i" style="left:1884px;top:994px"><path d="M6 4l4 4-4 4" fill="none" stroke="#bbb" stroke-width="1.800"/></svg>

<!-- status bar -->
<div class="ln" style="left:1337px;top:1016px;width:1px;height:21px"></div>
<div class="ln" style="left:1442px;top:1016px;width:1px;height:21px"></div>
<div class="ln" style="left:1544px;top:1016px;width:1px;height:21px"></div>
<span class="t" style="left:1350px;top:1015px">Writable</span>
<span class="t" style="left:1454px;top:1015px">Smart Insert</span>
<span class="t" style="left:1552px;top:1015px">38 : 43</span>
<span class="t" style="left:1595px;top:983px;height:32px;letter-spacing:.5px;font:24px/32px 'Liberation Sans','Noto Sans CJK SC',sans-serif;color:#808080;text-shadow:1px 1px 0 #fff,-1px 0 0 #c8c8c8">掘金技术社区 @ 北京_宏哥</span>
</body></html>
